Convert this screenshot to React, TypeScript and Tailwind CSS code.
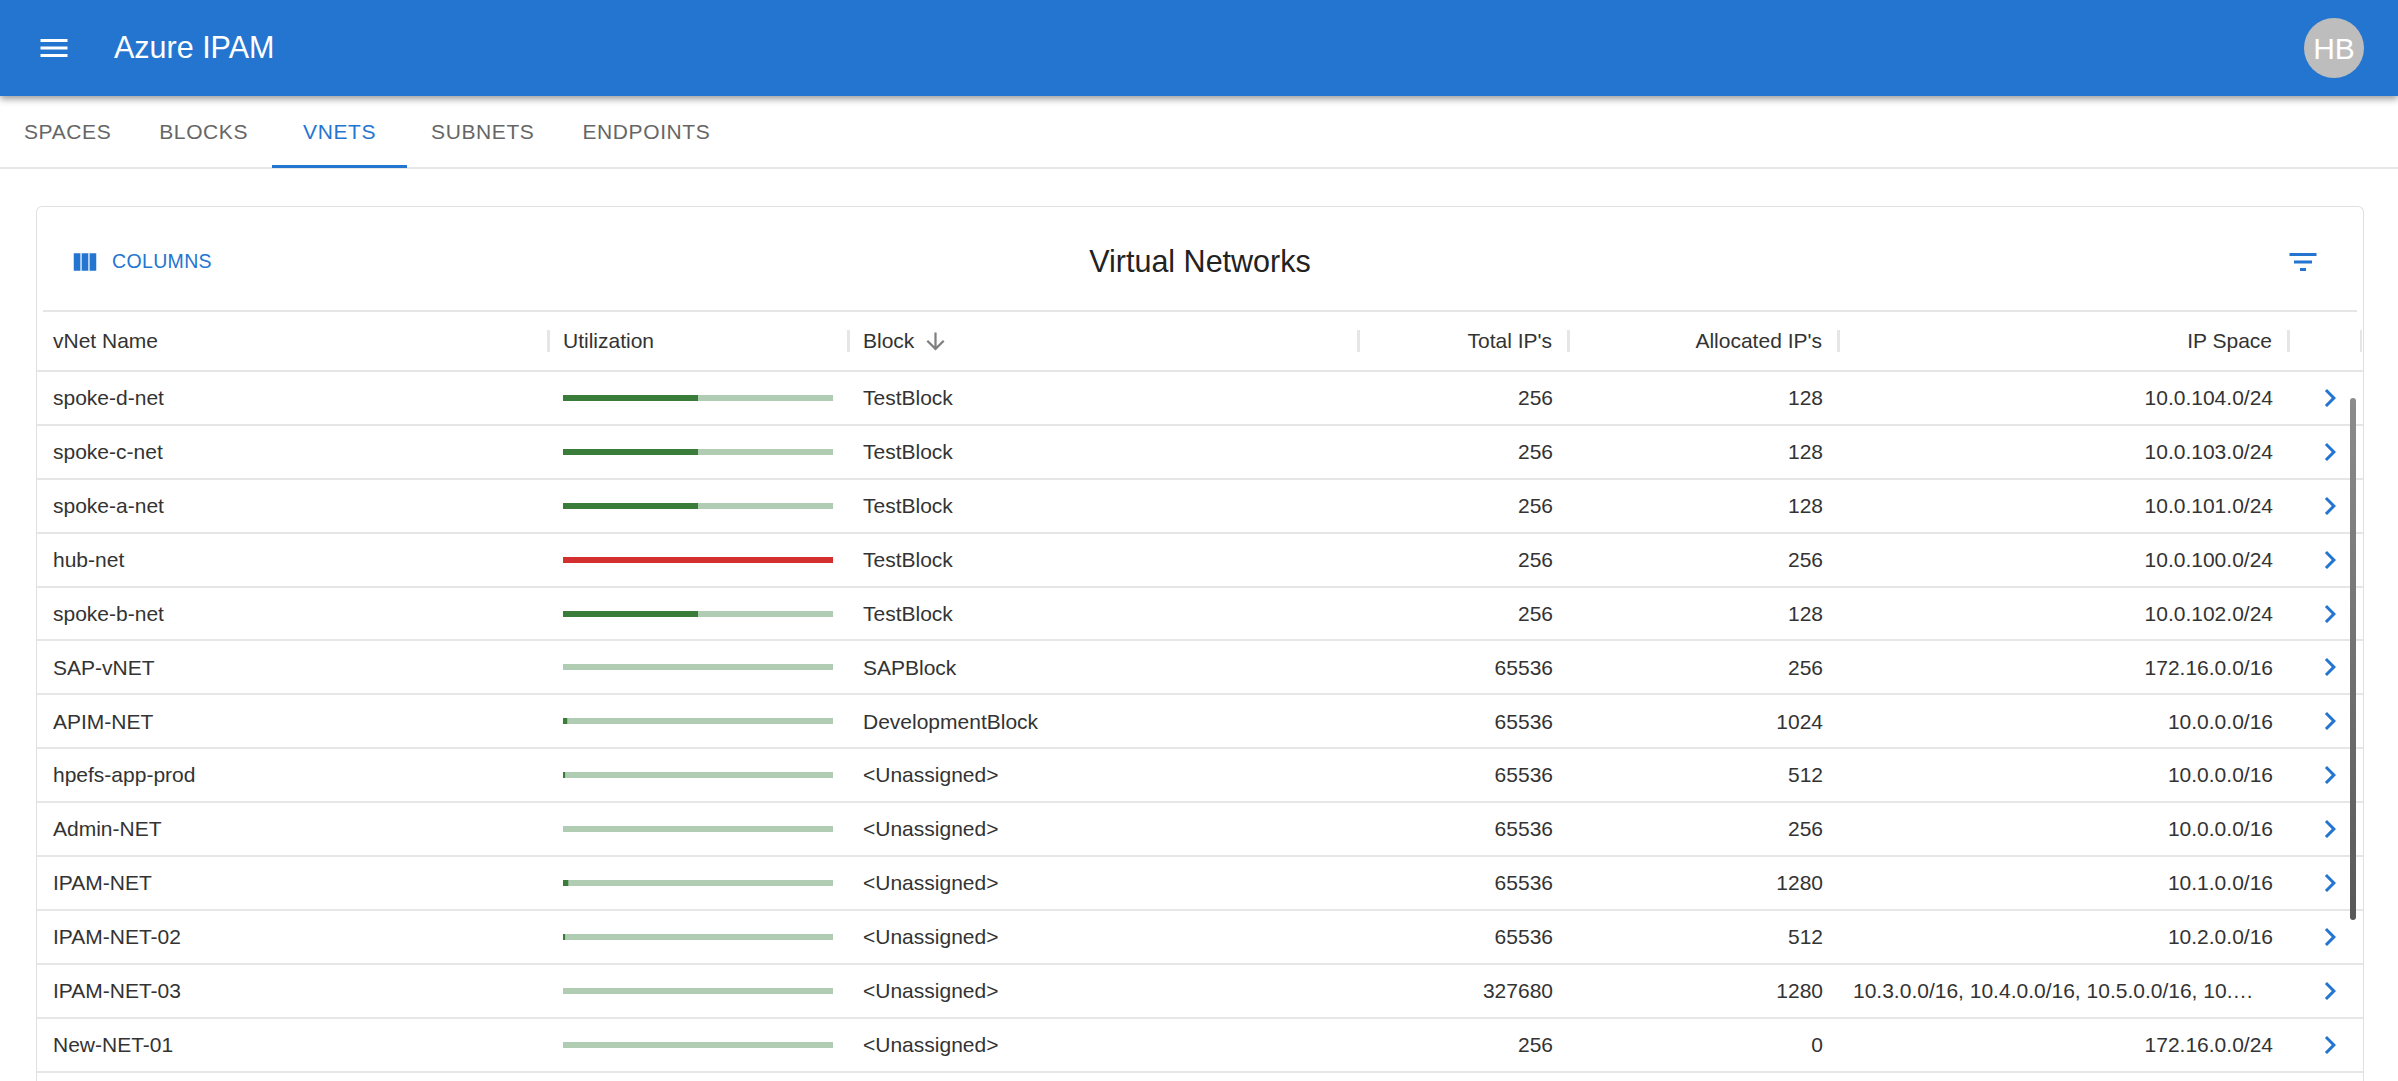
type Row = { name: string; block: string; total: number; alloc: number; space: string };

const rows: Row[] = [
  { name: "spoke-d-net", block: "TestBlock", total: 256, alloc: 128, space: "10.0.104.0/24" },
  { name: "spoke-c-net", block: "TestBlock", total: 256, alloc: 128, space: "10.0.103.0/24" },
  { name: "spoke-a-net", block: "TestBlock", total: 256, alloc: 128, space: "10.0.101.0/24" },
  { name: "hub-net", block: "TestBlock", total: 256, alloc: 256, space: "10.0.100.0/24" },
  { name: "spoke-b-net", block: "TestBlock", total: 256, alloc: 128, space: "10.0.102.0/24" },
  { name: "SAP-vNET", block: "SAPBlock", total: 65536, alloc: 256, space: "172.16.0.0/16" },
  { name: "APIM-NET", block: "DevelopmentBlock", total: 65536, alloc: 1024, space: "10.0.0.0/16" },
  { name: "hpefs-app-prod", block: "<Unassigned>", total: 65536, alloc: 512, space: "10.0.0.0/16" },
  { name: "Admin-NET", block: "<Unassigned>", total: 65536, alloc: 256, space: "10.0.0.0/16" },
  { name: "IPAM-NET", block: "<Unassigned>", total: 65536, alloc: 1280, space: "10.1.0.0/16" },
  { name: "IPAM-NET-02", block: "<Unassigned>", total: 65536, alloc: 512, space: "10.2.0.0/16" },
  { name: "IPAM-NET-03", block: "<Unassigned>", total: 327680, alloc: 1280, space: "10.3.0.0/16, 10.4.0.0/16, 10.5.0.0/16, 10.6.0.0/16" },
  { name: "New-NET-01", block: "<Unassigned>", total: 256, alloc: 0, space: "172.16.0.0/24" },
];

function Sep() {
  return <div className="mr-[-2px] h-[22px] w-[3px] shrink-0 bg-[#e6e6e6]" />;
}

function Bar({ alloc, total }: { alloc: number; total: number }) {
  const raw = alloc / total;
  const pct = raw < 0.005 ? 0 : raw;
  const full = pct >= 1;
  return (
    <div className={`h-[6px] w-[270px] overflow-hidden ${full ? "bg-[#d32f2f]" : "bg-[#b0ccb2]"}`}>
      <div
        className={`h-full w-full origin-left ${full ? "bg-[#d32f2f]" : "bg-[#3a7d3a]"}`}
        style={{ transform: `scaleX(${pct})` }}
      />
    </div>
  );
}

const tabs = ["Spaces", "Blocks", "vNets", "Subnets", "Endpoints"];

export default function App() {
  return (
    <div className="flex h-[1081px] w-[2398px] flex-col overflow-hidden bg-white font-['Liberation_Sans',Arial,sans-serif] text-[21px] text-[#333333]">
      <header className="relative z-10 flex h-24 shrink-0 items-center justify-between bg-[#2475d0] pl-9 pr-[34px] shadow-[0_3px_7px_rgba(0,0,0,0.4)]">
        <div className="flex items-center">
          <svg viewBox="0 0 24 24" className="h-9 w-9 fill-white">
            <path d="M3 18h18v-2H3v2zm0-5h18v-2H3v2zm0-7v2h18V6H3z" />
          </svg>
          <span className="ml-[42px] text-[30.5px] text-white">Azure IPAM</span>
        </div>
        <div className="flex h-[60px] w-[60px] items-center justify-center rounded-full bg-[#bdbdbd] text-[30px] text-white">HB</div>
      </header>

      <nav className="flex h-[73px] shrink-0 border-b-2 border-[#e6e6e6]">
        {tabs.map((t) => (
          <div
            key={t}
            className={`flex h-[72px] min-w-[135px] items-center justify-center px-6 text-[21px] uppercase tracking-[0.6px] ${
              t === "vNets" ? "border-b-[3px] border-[#2475d0] pt-[3px] text-[#2475d0]" : "text-[#666666]"
            }`}
          >
            {t}
          </div>
        ))}
      </nav>

      <main className="flex min-h-0 flex-1 flex-col pl-[36px] pr-[34px] pt-[37px]">
        <section className="relative flex min-h-0 flex-1 flex-col rounded-t-[6px] border border-b-0 border-[#e0e0e0]">
          <div className="mx-[6px] flex h-[105px] shrink-0 items-center justify-between border-b-2 border-[#e6e6e6] pl-[31px] pr-[36px] pt-[6px]">
            <div className="flex w-[200px] items-center gap-[12px] text-[19.5px] uppercase tracking-[0.35px] text-[#2475d0]">
              <svg viewBox="0 0 24 24" className="ml-[-4px] h-[30px] w-[30px] fill-[#2475d0]">
                <path d="M14.67 5v14H9.33V5h5.34zm1 14H21V5h-5.33v14zm-7.34 0V5H3v14h5.33z" />
              </svg>
              Columns
            </div>
            <div className="text-[30.5px] text-[#222222]">Virtual Networks</div>
            <div className="flex w-[195px] justify-end">
              <svg viewBox="0 0 24 24" className="h-9 w-9 fill-[#2475d0]">
                <path d="M10 18h4v-2h-4v2zM3 6v2h18V6H3zm3 7h12v-2H6v2z" />
              </svg>
            </div>
          </div>

          <div className="flex h-[60px] shrink-0 items-center border-b-2 border-[#e6e6e6]">
            <div className="flex w-[511px] items-center justify-between pl-[16px]"><span>vNet Name</span><Sep /></div>
            <div className="flex w-[300px] items-center justify-between pl-[15px]"><span>Utilization</span><Sep /></div>
            <div className="flex w-[510px] items-center justify-between pl-[15px]">
              <span className="flex items-center">
                Block
                <svg viewBox="0 0 24 24" className="ml-[8px] h-[27px] w-[27px] fill-[#808080]">
                  <path d="M20 12l-1.41-1.41L13 16.17V4h-2v12.17l-5.58-5.6L4 12l8 8 8-8z" />
                </svg>
              </span>
              <Sep />
            </div>
            <div className="flex w-[210px] items-center justify-end gap-[15px]"><span>Total IP's</span><Sep /></div>
            <div className="flex w-[270px] items-center justify-end gap-[15px]"><span>Allocated IP's</span><Sep /></div>
            <div className="flex w-[450px] items-center justify-end gap-[15px]"><span>IP Space</span><Sep /></div>
            <div className="flex w-[74px] justify-end"><div className="h-[22px] w-[2px] bg-[#e6e6e6]" /></div>
          </div>

          {rows.map((r) => (
            <div key={r.name} className="flex h-[53.9px] shrink-0 items-center border-b-2 border-[#e6e6e6]">
              <div className="w-[511px] pl-[16px]">{r.name}</div>
              <div className="w-[300px] pl-[15px]"><Bar alloc={r.alloc} total={r.total} /></div>
              <div className="w-[510px] pl-[15px]">{r.block}</div>
              <div className="w-[210px] pr-[15px] text-right">{r.total}</div>
              <div className="w-[270px] pr-[15px] text-right">{r.alloc}</div>
              <div className={`w-[450px] truncate pl-[15px] text-right ${r.space.length > 20 ? "pr-[30px]" : "pr-[15px]"}`}>{r.space}</div>
              <div className="flex w-[74px] pl-[24px]">
                <svg viewBox="0 0 24 24" className="h-9 w-9 fill-[#2475d0]">
                  <path d="M10 6 8.59 7.41 13.17 12l-4.58 4.59L10 18l6-6z" />
                </svg>
              </div>
            </div>
          ))}

          <div className="absolute right-[7px] top-[191px] h-[522px] w-[6px] rounded-full bg-linear-to-b from-[#8c8c8c] to-[#585858]" />
        </section>
      </main>
    </div>
  );
}
